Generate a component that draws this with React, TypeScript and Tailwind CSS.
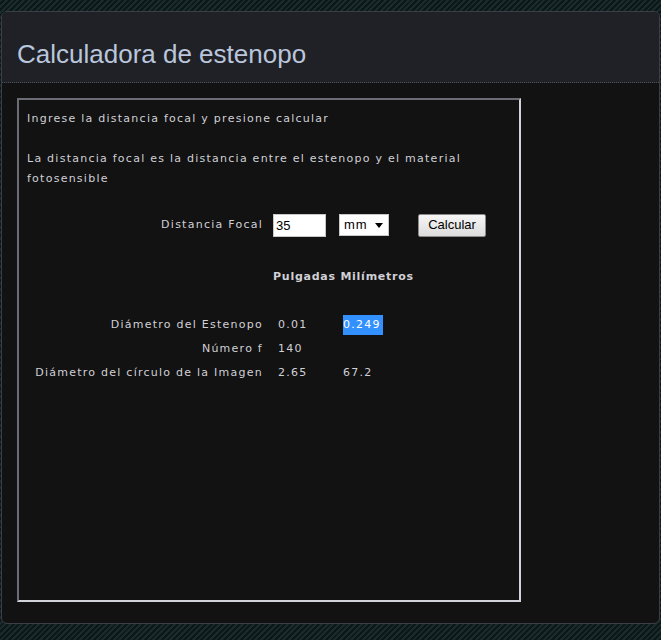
import React from "react";

// Calculadora de estenopo — dark panel with embedded calculator frame

const body = "font-['DejaVu_Sans',sans-serif] text-[11px] tracking-[1.25px] text-[#d0d0d6]";

const ROWS = [
  { label: "Diámetro del Estenopo", inch: "0.01", mm: "0.249", selected: true },
  { label: "Número f", inch: "140", mm: "", selected: false },
  { label: "Diámetro del círculo de la Imagen", inch: "2.65", mm: "67.2", selected: false },
];

export default function App() {
  return (
    <div className="h-[640px] w-[661px] overflow-hidden bg-[repeating-linear-gradient(-45deg,#0c1717_0px,#0c1717_2px,#1a2b2b_2px,#1a2b2b_4px)] pl-[1px] pt-[11px]">
      <div className="flex h-[613px] w-[659px] flex-col overflow-hidden rounded-[6px] border border-[#3b3e46] bg-[#121212]">
        {/* header */}
        <div className="h-[71px] shrink-0 border-b border-dotted border-[#4b4f5a] bg-[#202126] px-[15px] pt-[27px]">
          <h1 className="font-['Liberation_Sans',Arial,sans-serif] text-[26px] leading-[30px] text-[#bac6dc]">
            Calculadora de estenopo
          </h1>
        </div>

        {/* body */}
        <div className="flex-1 px-[15px] pt-[15px]">
          <div className={`h-[504px] w-[504px] border-2 border-t-[#6c6d74] border-l-[#6c6d74] border-r-[#d2d3da] border-b-[#d2d3da] bg-[#121212] px-[8px] pt-[9px] ${body}`}>
            <p className="leading-[20px]">Ingrese la distancia focal y presione calcular</p>
            <p className="mt-[20px] leading-[20px]">
              La distancia focal es la distancia entre el estenopo y el material fotosensible
            </p>

            {/* form row */}
            <div className="mt-[24px] flex h-[24px] items-center">
              <span className="w-[236px] text-right">Distancia Focal</span>
              <input
                defaultValue="35"
                className="ml-[10px] h-[23px] w-[53px] border border-[#c8c8c8] bg-white px-[2px] font-['Liberation_Sans',Arial,sans-serif] text-[13px] tracking-normal text-black outline-none"
              />
              <div className="ml-[13px] flex h-[22px] w-[50px] items-center justify-between border border-[#c8c8c8] bg-white pl-[4px] pr-[5px] font-['Liberation_Sans',Arial,sans-serif] text-[13px] tracking-[1px] text-black">
                <span>mm</span>
                <svg width="8" height="5" viewBox="0 0 8 5">
                  <path d="M0 0h8L4 5z" fill="#000" />
                </svg>
              </div>
              <button className="ml-[29px] h-[23px] w-[68px] rounded-[2px] border border-[#8a8a8a] bg-gradient-to-b from-[#f6f6f6] to-[#dcdcdc] font-['Liberation_Sans',Arial,sans-serif] text-[13px] tracking-normal text-black">
                Calcular
              </button>
            </div>

            <div className="mt-[30px] pl-[246px] font-bold leading-[20px] tracking-[0.75px]">Pulgadas Milímetros</div>

            {/* results */}
            <div className="mt-[26px] flex flex-col">
              {ROWS.map((r) => (
                <div key={r.label} className="flex h-[24px] items-center">
                  <span className="w-[236px] text-right">{r.label}</span>
                  <span className="ml-[15px] w-[65px]">{r.inch}</span>
                  <span className={r.selected ? "inline-block bg-[#3390ff] pr-[2px] leading-[20px] text-white" : ""}>{r.mm}</span>
                </div>
              ))}
            </div>
          </div>
        </div>
      </div>
    </div>
  );
}
